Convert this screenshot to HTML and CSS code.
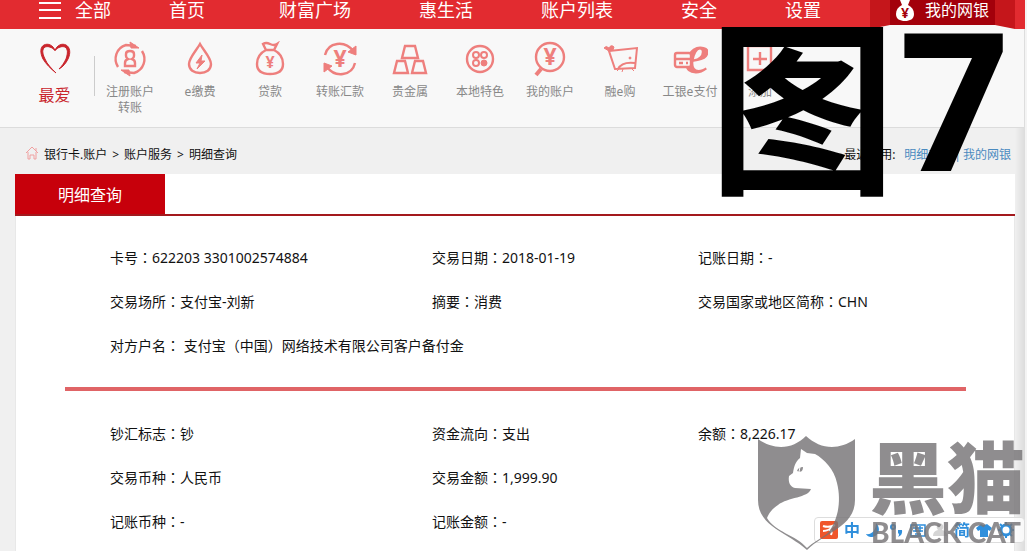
FILE: index.html
```html
<!DOCTYPE html>
<html lang="zh-CN">
  <head>
    <meta charset="UTF-8" />
    <meta name="viewport" content="width=device-width, initial-scale=1.0" />
    <title>明细查询</title>
    <link rel="stylesheet" href="styles.css">
  </head>
  <body>
    <div class="page">
      <nav class="navbar">
        <button class="menu-btn" type="button">
          <svg width="22" height="20" viewBox="0 0 22 20">
            <path d="M0 3h22M0 10h22M0 18h22" />
          </svg>
          全部
        </button>
        <div class="nav-links">
          <a href="#">首页</a>
          <a href="#">财富广场</a>
          <a href="#">惠生活</a>
          <a href="#">账户列表</a>
          <a href="#">安全</a>
          <a href="#">设置</a>
        </div>
        <a class="my-bank" href="#">
          <svg width="20" height="22" viewBox="0 0 20 22">
            <path fill="#fff" d="M5 0h10l-2 5c4 2 6 5 6 9 0 5-4 7-9 7s-9-2-9-7c0-4 2-7 6-9z" />
            <text x="10" y="18" class="yen-dark">¥</text>
          </svg>
          我的网银
        </a>
      </nav>

      <div class="shortcuts">
        <a class="favorite" href="#">
          <svg class="icon" viewBox="0 0 36 36">
            <path d="M18 9.500C16 4 11 2 7 4c-4 2-4 8-1 14 3 5 7 9 13 14-5-5-9-9-11-14-3-6-3-10 0-12 3-1 7 0 10 3.500zM18 9.500C20 4 25 2 29 4c4 2 5 8 2 14-2 4-5 8-9 10 3-3 5-6 7-10 2-6 2-10-1-12-3-1-7 0-10 3.500z" />
          </svg>
          最爱
        </a>
        <a class="shortcut" href="#">
          <svg class="icon" viewBox="0 0 36 36">
            <path d="M6 26C1 18 4 7 14 4l10 1M30 10c5 8 2 19-8 22l-10-1" />
            <path class="fill" d="M18 1l9 6h-8zM18 35l-9-6h8z" />
            <path d="M14 13q0-3 4-3t4 3v2q0 2-2 3 3 1 3 4v3H13v-3q0-3 3-4-2-1-2-3z" />
          </svg>
          注册账户<br>转账
        </a>
        <a class="shortcut" href="#">
          <svg class="icon" viewBox="0 0 36 36">
            <path d="M18 3C14 10 7 17 7 23c0 6 5 9 11 9s11-3 11-9c0-6-7-13-11-20z" />
            <path class="fill" d="M20 14l-6 8h4l-3 6 8-8h-4z" />
          </svg>
          e缴费
        </a>
        <a class="shortcut" href="#">
          <svg class="icon" viewBox="0 0 36 36">
            <path d="M14 9l-3-6q3-2 7 0t7 0l-3 6zM14 9C8 12 5 17 5 23c0 7 5 10 13 10s13-3 13-10c0-6-3-11-9-14" />
            <text x="18" y="27" class="yen">¥</text>
          </svg>
          贷款
        </a>
        <a class="shortcut" href="#">
          <svg class="icon" viewBox="0 0 36 36">
            <path d="M3 14C6 1 23-1 31 10M33 22C30 35 13 37 5 26" />
            <path class="fill" d="M34 5v9l-8-3zM2 31v-9l8 3z" />
            <text x="18" y="26" class="yen big">¥</text>
          </svg>
          转账汇款
        </a>
        <a class="shortcut" href="#">
          <svg class="icon" viewBox="0 0 36 36">
            <path d="M13 5h10l3 12H10zM5 20h8l3 12H2zM23 20h8l3 12H20z" />
          </svg>
          贵金属
        </a>
        <a class="shortcut" href="#">
          <svg class="icon" viewBox="0 0 36 36">
            <circle cx="18" cy="18" r="13" />
            <g class="thin">
              <circle cx="14" cy="14" r="3" />
              <circle cx="22" cy="14" r="3" />
              <circle cx="14" cy="22" r="3" />
              <circle class="fill" cx="22" cy="22" r="3" />
            </g>
          </svg>
          本地特色
        </a>
        <a class="shortcut" href="#">
          <svg class="icon" viewBox="0 0 36 36">
            <circle cx="18" cy="16" r="14" />
            <path class="thick" d="M9 28l-5 6" />
            <text x="18" y="24" class="yen big">¥</text>
          </svg>
          我的账户
        </a>
        <a class="shortcut" href="#">
          <svg class="icon" viewBox="0 0 36 36">
            <g class="thin">
              <path d="M7 10l28-3-2 20-20 1zM16 28c3-6 9-7 17-6" />
              <path class="fill" d="M7 10L2 7q2-3 5 0 2-4 5-1l-1 3zM17 28l-2 2M21 28l-1 3M30 28l2 2" />
              <circle class="fill" cx="28" cy="17" r="1" />
            </g>
          </svg>
          融e购
        </a>
        <a class="shortcut" href="#">
          <svg class="icon" viewBox="0 0 36 36">
            <text x="25" y="32" class="e-logo">e</text>
            <rect class="card" x="3" y="12" width="16" height="14" rx="2" />
            <path d="M3 18h16M7 22h4M14 22h2" />
          </svg>
          工银e支付
        </a>
        <a class="shortcut" href="#">
          <svg class="icon" viewBox="0 0 36 36">
            <path d="M6 5h23v24H6zM18 11v13M11 18h14" />
          </svg>
          添加
        </a>
      </div>

      <main class="main">
        <div class="crumb-bar">
          <div class="crumbs">
            <svg width="14" height="14" viewBox="0 0 14 14">
              <path d="M1 7l6-6 6 6M3 6v7h2V9h4v4h2V6M11 5V2" />
            </svg>
            <a href="#">银行卡.账户</a>
            <span>&gt;</span>
            <a href="#">账户服务</a>
            <span>&gt;</span>
            <a href="#">明细查询</a>
          </div>
          <div class="recent">
            <span>最近使用:</span>
            <a href="#">明细查询</a>
            <span class="bar">|</span>
            <a href="#">我的网银</a>
          </div>
        </div>

        <div class="tabs">
          <button class="tab" type="button">明细查询</button>
        </div>
        <div class="panel">
          <div class="details">
            <p>卡号<span class="mark">：</span>622203 3301002574884</p>
            <p>交易日期<span class="mark">：</span>2018-01-19</p>
            <p>记账日期<span class="mark">：</span>-</p>
            <p>交易场所<span class="mark">：</span>支付宝-刘新</p>
            <p>摘要<span class="mark">：</span>消费</p>
            <p>交易国家或地区简称<span class="mark">：</span>CHN</p>
            <p class="wide">对方户名<span class="mark">：</span> 支付宝<span class="mark">（</span>中国<span class="mark">）</span>网络技术有限公司客户备付金</p>
          </div>
          <hr class="line">
          <div class="details">
            <p>钞汇标志<span class="mark">：</span>钞</p>
            <p>资金流向<span class="mark">：</span>支出</p>
            <p>余额<span class="mark">：</span>8,226.17</p>
            <p>交易币种<span class="mark">：</span>人民币</p>
            <p class="wide-end">交易金额<span class="mark">：</span>1,999.90</p>
            <p>记账币种<span class="mark">：</span>-</p>
            <p>记账金额<span class="mark">：</span>-</p>
          </div>
        </div>
      </main>
    </div>

    <div class="figure-label">
      <span class="word">图</span>
      <span class="number">7</span>
    </div>

    <!-- input method bar -->
    <div class="ime">
      <svg width="18" height="18" viewBox="0 0 18 18">
        <rect width="18" height="18" rx="2" fill="#f0562b" />
        <path d="M3 5q6 2 12-1M3 10q6 0 10-5M9 9q4 0 2 5" stroke="#fff" stroke-width="2" fill="none" />
      </svg>
      <span>中</span>
      <svg width="16" height="16" viewBox="0 0 16 16">
        <path d="M10 1c6 6 2 14-5 14-2 0-4-1-5-3 6 1 10-4 10-11z" />
      </svg>
      <svg width="16" height="16" viewBox="0 0 16 16">
        <circle cx="5" cy="5" r="2" fill="none" stroke="#2f8fdc" stroke-width="2" />
        <path d="M10 8h4q1 5-4 7 2-3 0-4z" />
      </svg>
      <svg width="16" height="16" viewBox="0 0 16 16">
        <path d="M1 3h14v11H1zM3 6h10M3 9h10M5 12h6M6 4v6M10 4v6" fill="none" stroke="#2f8fdc" stroke-width="1.500" />
      </svg>
      <svg width="16" height="16" viewBox="0 0 16 16">
        <path fill="#d5d5d5" d="M8 1a4 4 0 0 1 2 7q5 1 5 6H1q0-5 5-6a4 4 0 0 1 2-7z" />
      </svg>
      <span>简</span>
      <svg width="16" height="16" viewBox="0 0 16 16">
        <path d="M5 2q3 2 6 0l5 4-2 3-2-1v7H4V8L2 9 0 6z" />
      </svg>
      <svg width="16" height="16" viewBox="0 0 16 16">
        <circle cx="8" cy="8" r="5" fill="none" stroke="#2f8fdc" stroke-width="3" />
        <path d="M8 0v3M8 13v3M0 8h3M13 8h3M2 2l3 3M11 11l3 3M14 2l-3 3M5 11l-3 3" stroke="#2f8fdc" stroke-width="2" />
      </svg>
    </div>

    <div class="watermark">
      <svg width="97" height="115" viewBox="0 0 97 115">
        <path fill-rule="evenodd" d="M0 3C17 15 35 13 48 0c14 13 32 15 49 3v61c0 27-31 33-48 50C31 97 0 91 0 64zM43 13l-1 9c-5 4-6 9-7 15l-4 3c-1 6 1 11 6 12l16 1c-3 9-23 8-33 16-6 4-9 8-11 13 8 14 29 17 40 30 6-6 14-9 21-15 9-11 14-30 9-50-3-14-13-24-22-29l-8-1z" />
        <path d="M39 35c1-3 3-4 6-4 0 4-2 6-6 4z" />
        <path d="M42 31l-1 5" stroke="#fff" />
      </svg>
      <div class="watermark-text">
        <div class="cn">黑猫</div>
        <div class="en">BLACK CAT</div>
      </div>
    </div>
  </body>
</html>
```
FILE: styles.css
```css
* {
  margin: 0;
  padding: 0;
  box-sizing: border-box;
}
html {
  overflow: hidden;
}
body {
  padding-right: 2px;
  background-color: #f4f4f4;
  font-family: "Noto Sans", "Noto Sans CJK SC", sans-serif;
  font-size: 14px;
  color: #111;
}
a {
  color: inherit;
  text-decoration: none;
}
button {
  border: none;
  font: inherit;
  cursor: pointer;
}

.page {
  min-height: 100vh;
  background: linear-gradient(to left, #dcdcdc, #f0f0f0 10px);
}

/* top navigation */
.navbar {
  display: flex;
  height: 29px;
  padding: 0 10px 0 39px;
  background-color: #e22b30;
  color: #fff;
  font-size: 18px;
  line-height: 20px;
}
.menu-btn {
  display: flex;
  gap: 14px;
  height: 20px;
  margin-right: 58px;
  background: none;
  color: #fff;
  line-height: 20px;
}
.menu-btn svg {
  stroke: #fff;
  stroke-width: 2;
}
.nav-links {
  display: flex;
  flex: 1;
  gap: 68px;
}
.nav-links a:first-child {
  margin-right: 6px;
}
.my-bank {
  position: relative;
  display: flex;
  align-items: flex-start;
  gap: 10px;
  width: 145px;
  padding-left: 25px;
  background-color: #f8f8f8;
  font-size: 16px;
  z-index: 0;
}
.my-bank::before {
  content: "";
  position: absolute;
  inset: 0;
  z-index: -1;
  background: linear-gradient(to right, #c5161b 20px, #a3000b 20px, #a3000b 125px, #c5161b 125px);
  clip-path: polygon(0 0, 100% 0, 100% 100%, 125px 25px, 20px 25px, 0 100%);
}
.yen-dark {
  fill: #a3000b;
  font-size: 14px;
  font-weight: bold;
  text-anchor: middle;
}

/* shortcut icons */
.shortcuts {
  display: flex;
  height: 99px;
  padding: 12px 0 0 14px;
  background-color: #f8f8f8;
  border-bottom: 1px solid #dcdcdc;
  margin-right: 1px;
}
.favorite,
.shortcut {
  display: flex;
  flex-direction: column;
  align-items: center;
  width: 70px;
  color: #888;
  font-size: 12px;
  line-height: 16px;
  text-align: center;
  white-space: nowrap;
}
.shortcut {
  gap: 7px;
}
.favorite {
  position: relative;
  gap: 8px;
  width: 81px;
  color: #c9252c;
  font-size: 16px;
  line-height: 20px;
}
.favorite::after {
  content: "";
  position: absolute;
  top: 15px;
  right: 0;
  height: 40px;
  border-right: 1px solid #ccc;
}
.icon {
  flex: none;
  width: 36px;
  height: 36px;
  fill: none;
  stroke: #ee7f7d;
  stroke-width: 2.4;
}
.favorite .icon {
  fill: #c9252c;
  stroke: #c9252c;
  stroke-width: 1;
}
.icon .fill {
  fill: #ee7f7d;
  stroke-width: 1;
}
.icon .thin {
  stroke-width: 2;
}
.icon .thick {
  stroke-width: 4;
}
.icon .card {
  fill: #f8f8f8;
}
.icon text {
  fill: #ee7f7d;
  stroke: none;
  text-anchor: middle;
}
.icon .yen {
  font-size: 16px;
  font-weight: bold;
}
.icon .big {
  font-size: 23px;
}
.e-logo {
  font-family: "Liberation Serif", serif;
  font-size: 58px;
  font-style: italic;
  font-weight: bold;
}

/* breadcrumb */
.main {
  padding: 0 10px 0 15px;
}
.crumb-bar {
  display: flex;
  justify-content: space-between;
  height: 46px;
  padding: 17px 4px 0 10px;
  font-size: 12px;
  line-height: 20px;
}
.crumbs,
.recent {
  display: flex;
  gap: 5px;
}
.crumbs svg {
  margin-top: 1px;
  fill: none;
  stroke: #f0a0a0;
}
.recent a {
  color: #4a8abf;
}
.recent .bar {
  color: #4a8abf;
  margin: 0 -3px;
}
.recent span:first-child {
  margin-right: 4px;
}

/* tab and panel */
.tabs {
  display: flex;
  background-color: #fff;
  border-bottom: 2px solid #a3191d;
}
.tab {
  width: 150px;
  height: 40px;
  background-color: #c7000b;
  color: #fff;
  font-size: 16px;
}
.panel {
  min-height: 336px;
  padding: 20px 0;
  background-color: #fff;
  border: 1px solid #e8e8e8;
  border-top: none;
}
.details {
  display: grid;
  grid-template-columns: 322fr 266fr 316fr;
  padding-left: 94px;
  line-height: 44px;
}
.details .wide {
  grid-column: 1 / -1;
}
.details .wide-end {
  grid-column: 2 / -1;
}
/* full-width punctuation centred in its cell */
.mark {
  font-family: "Noto Sans CJK TC", sans-serif;
  font-feature-settings: "locl" 0;
  line-height: 20px;
}
.line {
  height: 4px;
  margin: 19px 48px 21px 49px;
  border: none;
  background-color: #e06466;
}

/* things floating over the page */
.figure-label {
  position: absolute;
  top: 12px;
  right: 18px;
  display: flex;
  align-items: flex-start;
  gap: 3px;
  color: #000;
  font-family: "Open Sans", "Noto Sans CJK SC", sans-serif;
  font-weight: bold;
}
.figure-label .word {
  font-size: 188px;
  line-height: 188px;
}
.figure-label .number {
  font-size: 192px;
  line-height: 170px;
}
.ime {
  position: fixed;
  right: 2px;
  bottom: 8px;
  display: flex;
  align-items: center;
  gap: 6px;
  width: 211px;
  height: 26px;
  padding-left: 5px;
  background-color: rgba(255, 255, 255, 0.8);
  border: 1px solid #ddd;
  border-radius: 4px;
  color: #2f8fdc;
  fill: #2f8fdc;
  font-size: 16px;
  font-weight: bold;
  line-height: 24px;
}
.ime svg {
  flex: none;
}
.watermark {
  position: fixed;
  right: 2px;
  bottom: 0;
  display: flex;
  gap: 14px;
  color: #777577;
  fill: #777577;
  opacity: 0.82;
}
.watermark .cn {
  padding-top: 4px;
  font-size: 78px;
  font-weight: 900;
  line-height: 76px;
}
.watermark .en {
  padding-left: 2px;
  font-family: Lato, sans-serif;
  font-size: 28px;
  font-weight: 900;
  line-height: 33px;
}
```
